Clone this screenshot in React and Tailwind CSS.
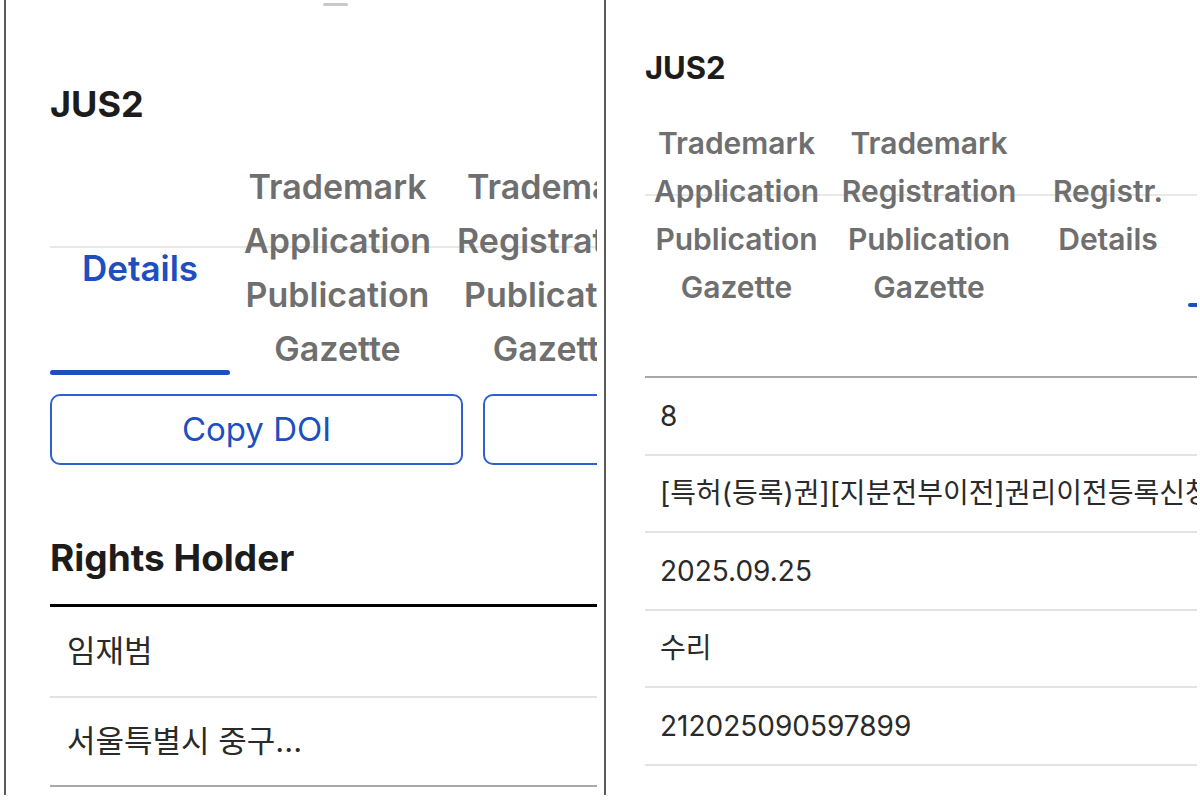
import React from 'react';

const LEFT_TABS = [
  { id: 'details', lines: ['Details'], width: 'w-[180px]', active: true },
  { id: 'tm-app', lines: ['Trademark', 'Application', 'Publication', 'Gazette'], width: 'w-[215px]' },
  { id: 'tm-reg', lines: ['Trademark', 'Registration', 'Publication', 'Gazette'], width: 'w-[222px]' },
];

const RIGHT_TABS = [
  { id: 'tm-app', lines: ['Trademark', 'Application', 'Publication', 'Gazette'], width: 'w-[183px]' },
  { id: 'tm-reg', lines: ['Trademark', 'Registration', 'Publication', 'Gazette'], width: 'w-[202px]' },
  { id: 'reg', lines: ['Registr.', 'Details'], width: 'w-[156px]' },
  { id: 'holder', lines: ['Rights', 'Holder'], width: 'w-[220px]', active: true },
];

const REG_ROWS = [
  '8',
  '[특허(등록)권][지분전부이전]권리이전등록신청서',
  '2025.09.25',
  '수리',
  '212025090597899',
];

function LeftPanel() {
  return (
    <div className="ml-[4px] h-[795px] w-[602px] shrink-0 border-x-2 border-[#5b5b5b]">
      <div className="ml-[44px] w-[547px] overflow-hidden">
        {/* sheet handle */}
        <div className="ml-[273px] mt-[3px] h-[3px] w-[25px] rounded-full bg-[#c9c9c9]" />

        <h1 className="mt-[78px] text-[36px] font-bold leading-[40px] text-[#1c1c1c]">JUS2</h1>

        {/* tab bar */}
        <div className="relative mt-[36px] flex h-[216px]">
          <div className="absolute left-0 right-0 top-[86px] h-[2px] bg-[#e8e8e8]" />
          {LEFT_TABS.map((tab) => (
            <div
              key={tab.id}
              className={`relative flex h-full shrink-0 flex-col items-center justify-center ${tab.width}`}
            >
              {tab.lines.map((line) => (
                <span
                  key={line}
                  className={`relative whitespace-nowrap text-[34px] font-semibold leading-[54px] ${
                    tab.active ? 'text-[35px] font-bold text-[#1d4fc0]' : 'text-[#6f6f6f]'
                  }`}
                >
                  {line}
                </span>
              ))}
              {tab.active && (
                <div className="absolute bottom-[1px] left-0 right-0 h-[5px] rounded-full bg-[#1d4fc0]" />
              )}
            </div>
          ))}
        </div>

        {/* actions */}
        <div className="mt-[18px] flex h-[71px] gap-[20px]">
          <button className="flex w-[413px] shrink-0 items-center justify-center rounded-[10px] border-2 border-[#2f5fd0] text-[33px] text-[#1d4fc0]">
            Copy DOI
          </button>
          <button className="flex w-[413px] shrink-0 items-center justify-center rounded-[10px] border-2 border-[#2f5fd0] text-[33px] text-[#1d4fc0]">
            Copy Link
          </button>
        </div>

        <h2 className="mt-[71px] text-[37px] font-bold leading-[44px] text-[#1c1c1c]">Rights Holder</h2>

        <div className="mt-[24px] border-t-[3px] border-black">
          <div className="flex h-[91px] items-center border-b-2 border-[#e2e2e2] pl-[17px] text-[31px] text-[#2a2a2a]">
            임재범
          </div>
          <div className="flex h-[89px] items-center border-b-2 border-[#a9a9a9] pl-[17px] text-[31px] text-[#2a2a2a]">
            서울특별시 중구...
          </div>
        </div>
      </div>
    </div>
  );
}

function RightPanel() {
  return (
    <div className="h-[795px] w-[594px] shrink-0">
      <div className="ml-[39px] w-[552px] overflow-hidden">
        <h1 className="mt-[50px] text-[31px] font-bold leading-[36px] text-[#1c1c1c]">JUS2</h1>

        <div className="relative mt-[33px] flex h-[191px]">
          <div className="absolute left-0 right-0 top-[75px] h-[2px] bg-[#e8e8e8]" />
          {RIGHT_TABS.map((tab) => (
            <div
              key={tab.id}
              className={`relative flex h-full shrink-0 flex-col items-center justify-center ${tab.width}`}
            >
              {tab.lines.map((line) => (
                <span
                  key={line}
                  className="relative whitespace-nowrap text-[30px] font-semibold leading-[48px] text-[#6f6f6f]"
                >
                  {line}
                </span>
              ))}
              {tab.active && (
                <div className="absolute bottom-[3px] left-[2px] right-0 h-[4px] rounded-full bg-[#1d4fc0]" />
              )}
            </div>
          ))}
        </div>

        <div className="mt-[66px] border-t-2 border-[#a8a8a8]">
          {REG_ROWS.map((row) => (
            <div
              key={row}
              className="flex h-[77.5px] items-center whitespace-nowrap border-b-2 border-[#e3e3e3] pl-[15px] text-[28px] text-[#2a2a2a]"
            >
              {row}
            </div>
          ))}
        </div>
      </div>
    </div>
  );
}

export default function App() {
  return (
    <div className="flex h-[800px] w-[1200px] overflow-hidden bg-white font-['Inter','Noto_Sans_CJK_KR',sans-serif]">
      <LeftPanel />
      <RightPanel />
    </div>
  );
}
